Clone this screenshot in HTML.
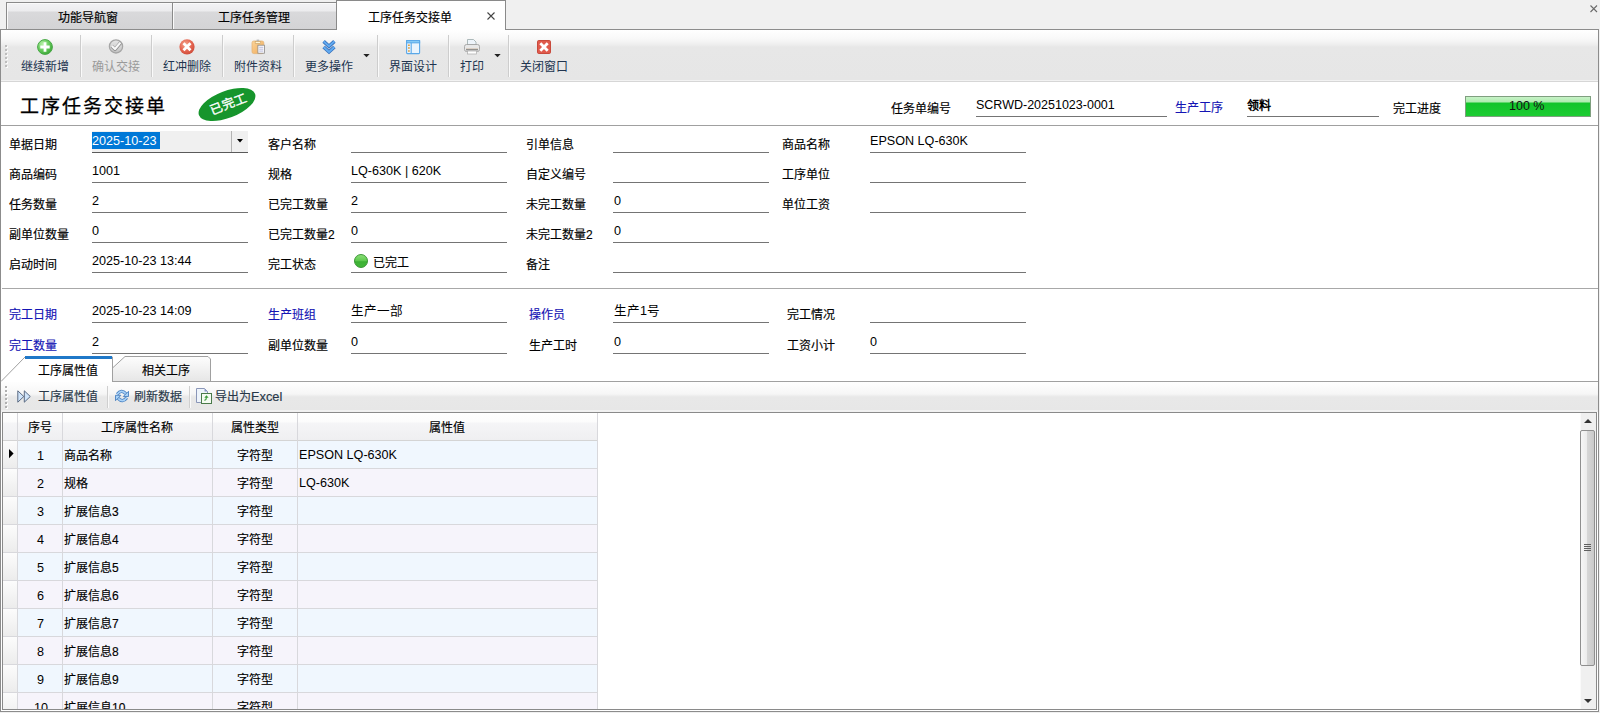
<!DOCTYPE html>
<html lang="zh-CN"><head><meta charset="utf-8"><style>
html,body{margin:0;padding:0;}
body{width:1600px;height:713px;overflow:hidden;position:relative;background:#f0f0f0;font-family:"Liberation Sans",sans-serif;font-size:12px;color:#000;}
.a{position:absolute;box-sizing:border-box;}
.t{position:absolute;white-space:nowrap;line-height:20px;}
.k{-webkit-text-stroke:0.15px currentColor;}
svg{position:absolute;overflow:visible}
</style></head><body>
<div class="a" style="left:6px;top:2px;width:167px;height:28px;border:1px solid #8a8a8a;border-bottom:none;background:linear-gradient(#f3f3f5 0px,#ececee 8px,#d9d9db 9px,#d3d3d5 100%);box-shadow:inset 1px 1px 0 #fafafa;"></div>
<div class="a" style="left:172px;top:2px;width:165px;height:28px;border:1px solid #8a8a8a;border-bottom:none;background:linear-gradient(#f3f3f5 0px,#ececee 8px,#d9d9db 9px,#d3d3d5 100%);box-shadow:inset 1px 1px 0 #fafafa;"></div>
<div class="a" style="left:0px;top:29px;width:1599px;height:683px;border:1px solid #8c8c8c;background:#fff;"></div>
<div class="a" style="left:336px;top:0px;width:170px;height:31px;border:1px solid #8a8a8a;border-bottom:none;background:#fff;"></div>
<div class="t k" style="left:58px;top:8px;">功能导航窗</div>
<div class="t k" style="left:218px;top:8px;">工序任务管理</div>
<div class="t k" style="left:368px;top:8px;">工序任务交接单</div>
<svg style="left:487px;top:12px" width="8" height="8"><path d="M0.5 0.5L7.5 7.5M7.5 0.5L0.5 7.5" stroke="#444" stroke-width="1.1"/></svg>
<svg style="left:1590px;top:5px" width="8" height="8"><path d="M0.5 0.5L7 7M7 0.5L0.5 7" stroke="#6a6a6a" stroke-width="1.1"/></svg>
<div class="a" style="left:1px;top:30px;width:1597px;height:52px;background:linear-gradient(#ffffff 0px,#f9f9f9 8px,#f3f3f3 12px,#ededed 15px,#e7e7e7 17px,#e6e6e6 50px,#f2f2f2 50px,#f2f2f2 51px,#d6d6d6 51px);"></div>
<div class="a" style="left:5px;top:45px;width:2px;height:2px;background:#bdbdbd;box-shadow:1px 1px 0 #fafafa;"></div>
<div class="a" style="left:5px;top:49px;width:2px;height:2px;background:#bdbdbd;box-shadow:1px 1px 0 #fafafa;"></div>
<div class="a" style="left:5px;top:53px;width:2px;height:2px;background:#bdbdbd;box-shadow:1px 1px 0 #fafafa;"></div>
<div class="a" style="left:5px;top:57px;width:2px;height:2px;background:#bdbdbd;box-shadow:1px 1px 0 #fafafa;"></div>
<div class="a" style="left:5px;top:61px;width:2px;height:2px;background:#bdbdbd;box-shadow:1px 1px 0 #fafafa;"></div>
<div class="a" style="left:5px;top:65px;width:2px;height:2px;background:#bdbdbd;box-shadow:1px 1px 0 #fafafa;"></div>
<div class="a" style="left:80px;top:35px;width:1px;height:42px;background:#cdcdcd;box-shadow:1px 0 0 #fafafa;"></div>
<div class="a" style="left:151px;top:35px;width:1px;height:42px;background:#cdcdcd;box-shadow:1px 0 0 #fafafa;"></div>
<div class="a" style="left:222px;top:35px;width:1px;height:42px;background:#cdcdcd;box-shadow:1px 0 0 #fafafa;"></div>
<div class="a" style="left:293px;top:35px;width:1px;height:42px;background:#cdcdcd;box-shadow:1px 0 0 #fafafa;"></div>
<div class="a" style="left:377px;top:35px;width:1px;height:42px;background:#cdcdcd;box-shadow:1px 0 0 #fafafa;"></div>
<div class="a" style="left:448px;top:35px;width:1px;height:42px;background:#cdcdcd;box-shadow:1px 0 0 #fafafa;"></div>
<div class="a" style="left:508px;top:35px;width:1px;height:42px;background:#cdcdcd;box-shadow:1px 0 0 #fafafa;"></div>
<div class="t k" style="left:21px;top:57px;color:#20344f;-webkit-text-stroke:0;">继续新增</div>
<div class="t k" style="left:92px;top:57px;color:#9a9a9a;-webkit-text-stroke:0;">确认交接</div>
<div class="t k" style="left:163px;top:57px;color:#20344f;-webkit-text-stroke:0;">红冲删除</div>
<div class="t k" style="left:234px;top:57px;color:#20344f;-webkit-text-stroke:0;">附件资料</div>
<div class="t k" style="left:305px;top:57px;color:#20344f;-webkit-text-stroke:0;">更多操作</div>
<div class="t k" style="left:389px;top:57px;color:#20344f;-webkit-text-stroke:0;">界面设计</div>
<div class="t k" style="left:460px;top:57px;color:#20344f;-webkit-text-stroke:0;">打印</div>
<div class="t k" style="left:520px;top:57px;color:#20344f;-webkit-text-stroke:0;">关闭窗口</div>
<svg style="left:363px;top:54px" width="7" height="4"><path d="M0.3 0H6.7L3.5 3.3Z" fill="#222"/></svg>
<svg style="left:494px;top:54px" width="7" height="4"><path d="M0.3 0H6.7L3.5 3.3Z" fill="#222"/></svg>
<svg style="left:37px;top:39px" width="16" height="16" viewBox="0 0 16 16">
<defs><radialGradient id="gp" cx="35%" cy="30%" r="75%"><stop offset="0" stop-color="#b8f2a8"/><stop offset="0.6" stop-color="#62c858"/><stop offset="1" stop-color="#3ca438"/></radialGradient></defs>
<circle cx="8" cy="8" r="7.4" fill="url(#gp)" stroke="#48a846" stroke-width="1"/>
<path d="M6.6 3.3H9.4V6.6H12.7V9.4H9.4V12.7H6.6V9.4H3.3V6.6H6.6Z" fill="#fff"/></svg>
<svg style="left:108px;top:39px" width="16" height="16" viewBox="0 0 16 16">
<defs><linearGradient id="gc" x1="0" y1="0" x2="0" y2="1"><stop offset="0" stop-color="#e6e6e6"/><stop offset="1" stop-color="#c4c4c4"/></linearGradient></defs>
<circle cx="8" cy="7.4" r="6.6" fill="url(#gc)" stroke="#a6a6a6" stroke-width="1.3"/>
<path d="M3.8 7.3L7 10.4L12.6 3.6" fill="none" stroke="#8e8e8e" stroke-width="3.4" stroke-linejoin="round"/>
<path d="M3.8 7L7 10L12.4 3.6" fill="none" stroke="#f8f8f8" stroke-width="2.2" stroke-linejoin="round"/></svg>
<svg style="left:179px;top:39px" width="16" height="16" viewBox="0 0 16 16">
<defs><radialGradient id="gr" cx="40%" cy="35%" r="70%"><stop offset="0" stop-color="#f4a890"/><stop offset="0.6" stop-color="#e46450"/><stop offset="1" stop-color="#cc4a38"/></radialGradient></defs>
<circle cx="8" cy="7.8" r="7.6" fill="url(#gr)"/>
<path d="M4.5 4.3L11.5 11.3M11.5 4.3L4.5 11.3" stroke="#fff" stroke-width="2.8"/></svg>
<svg style="left:251px;top:39px" width="16" height="16" viewBox="0 0 16 16">
<defs><linearGradient id="gcl" x1="0" y1="0" x2="1" y2="1"><stop offset="0" stop-color="#fbd49a"/><stop offset="1" stop-color="#f0aa58"/></linearGradient></defs>
<rect x="1" y="2" width="11.8" height="12.6" rx="1.8" fill="url(#gcl)" stroke="#e4b070" stroke-width="0.7"/>
<rect x="4.2" y="2.6" width="5.4" height="1.8" fill="#fff6d8" stroke="#c8a060" stroke-width="0.6"/>
<rect x="5.6" y="0.6" width="2.6" height="1.6" fill="#b8b8b8"/>
<rect x="6.9" y="6.2" width="6.6" height="8" fill="#fbfbfd" stroke="#8a8a8a" stroke-width="0.8"/>
<path d="M8.2 8.3H12.3M8.2 10.2H12.3M8.2 12.1H12.3" stroke="#b4b4d8" stroke-width="0.9"/></svg>
<svg style="left:322px;top:39px" width="16" height="16" viewBox="0 0 16 16">
<path d="M1.6 2.4L7 7.3L12.4 2.4M1.6 8L7 12.9L12.4 8" fill="none" stroke="#3a72bc" stroke-width="3.6"/>
<path d="M1.6 2.4L7 7.3L12.4 2.4M1.6 8L7 12.9L12.4 8" fill="none" stroke="#62acf2" stroke-width="1.9"/></svg>
<svg style="left:406px;top:40px" width="16" height="16" viewBox="0 0 16 16">
<rect x="0.6" y="0.6" width="13" height="13" rx="0.8" fill="#eaf4fd" stroke="#5aa8e8" stroke-width="1.1"/>
<rect x="0.6" y="0.6" width="13" height="2.2" fill="#8ed0f8" stroke="#5aa8e8" stroke-width="1.1"/>
<path d="M5.2 2.8V13.6" stroke="#5aa8e8" stroke-width="1.1"/>
<path d="M2.9 4.4V5.9M2.9 7.3V8.8M2.9 10.2V11.7" stroke="#e0a040" stroke-width="1.8"/></svg>
<svg style="left:464px;top:39px" width="16" height="16" viewBox="0 0 16 16">
<path d="M3.5 0.5H9.5L12 3V6H3.5Z" fill="#eef4fa" stroke="#9aa" stroke-width="0.8"/>
<rect x="0.5" y="5.5" width="15" height="7" rx="2" fill="#e8e8e8" stroke="#9a9a9a" stroke-width="0.8"/>
<path d="M2 9.8H14" stroke="#d8c8b8" stroke-width="1"/><path d="M2 10.8H14" stroke="#707070" stroke-width="1"/>
<rect x="3.5" y="12" width="9" height="3" fill="#fff" stroke="#aaa" stroke-width="0.7"/></svg>
<svg style="left:537px;top:40px" width="14" height="14" viewBox="0 0 14 14">
<rect x="0.5" y="0.5" width="13" height="13" rx="1.2" fill="#e05a4c" stroke="#c84a3c" stroke-width="1"/>
<path d="M3.3 3.3L10.7 10.7M10.7 3.3L3.3 10.7" stroke="#fff" stroke-width="2.8"/></svg>
<div class="a" style="left:1px;top:125px;width:1597px;height:1px;background:#a0a0a0;"></div>
<div class="t" style="left:20px;top:96px;font-size:19px;font-weight:normal;-webkit-text-stroke:0.25px #000;letter-spacing:2px;font-family:'Liberation Serif',serif;line-height:22px;">工序任务交接单</div>
<div class="a" style="left:197px;top:91px;width:60px;height:27px;border-radius:50%;background:#16952c;transform:rotate(-21deg);"></div>
<div class="t" style="left:209px;top:94px;font-size:12.5px;color:#fff;font-weight:normal;-webkit-text-stroke:0.35px #fff;transform:rotate(-21deg);transform-origin:20px 10px;">已完工</div>
<div class="t k" style="left:891px;top:99px;">任务单编号</div>
<div class="t" style="left:976px;top:95px;font-size:12.5px;">SCRWD-20251023-0001</div>
<div class="a" style="left:976px;top:116px;width:191px;height:1px;background:#747474;"></div>
<div class="t k" style="left:1175px;top:98px;color:#1414b4;">生产工序</div>
<div class="t k" style="left:1247px;top:96px;font-weight:bold;-webkit-text-stroke:0;">领料</div>
<div class="a" style="left:1247px;top:116px;width:132px;height:1px;background:#747474;"></div>
<div class="t k" style="left:1393px;top:99px;">完工进度</div>
<div class="a" style="left:1465px;top:96px;width:126px;height:21px;border:1px solid #7f9f7f;background:linear-gradient(#c6f2c6 0,#b0ecb0 5px,#12c42a 6px,#1ccc32 100%);"></div>
<div class="t" style="left:1509px;top:96px;font-size:12.5px;color:#111;">100 %</div>
<div class="t k" style="left:9px;top:135px;">单据日期</div>
<div class="a" style="left:92px;top:131px;width:156px;height:21px;background:#f0f0f0;"></div>
<div class="a" style="left:231px;top:131px;width:1px;height:21px;background:#b4b4b4;"></div>
<div class="a" style="left:92px;top:152px;width:156px;height:1px;background:#5a5a5a;"></div>
<div class="a" style="left:92px;top:132px;width:68px;height:17px;background:#0078d7;"></div>
<div class="t" style="left:92px;top:131px;font-size:12.6px;color:#fff;">2025-10-23</div>
<svg style="left:237px;top:139px" width="6" height="4"><path d="M0 0H6L3 3.5Z" fill="#000"/></svg>
<div class="t k" style="left:268px;top:135px;">客户名称</div>
<div class="a" style="left:351px;top:152px;width:156px;height:1px;background:#747474;"></div>
<div class="t k" style="left:526px;top:135px;">引单信息</div>
<div class="a" style="left:613px;top:152px;width:156px;height:1px;background:#747474;"></div>
<div class="t k" style="left:782px;top:135px;">商品名称</div>
<div class="a" style="left:870px;top:152px;width:156px;height:1px;background:#747474;"></div>
<div class="t" style="left:870px;top:131px;font-size:12.6px;">EPSON LQ-630K</div>
<div class="t k" style="left:9px;top:165px;">商品编码</div>
<div class="a" style="left:92px;top:182px;width:156px;height:1px;background:#747474;"></div>
<div class="t" style="left:92px;top:161px;font-size:12.6px;">1001</div>
<div class="t k" style="left:268px;top:165px;">规格</div>
<div class="a" style="left:351px;top:182px;width:156px;height:1px;background:#747474;"></div>
<div class="t" style="left:351px;top:161px;font-size:12.6px;">LQ-630K | 620K</div>
<div class="t k" style="left:526px;top:165px;">自定义编号</div>
<div class="a" style="left:613px;top:182px;width:156px;height:1px;background:#747474;"></div>
<div class="t k" style="left:782px;top:165px;">工序单位</div>
<div class="a" style="left:870px;top:182px;width:156px;height:1px;background:#747474;"></div>
<div class="t k" style="left:9px;top:195px;">任务数量</div>
<div class="a" style="left:92px;top:212px;width:156px;height:1px;background:#747474;"></div>
<div class="t" style="left:92px;top:191px;font-size:12.6px;">2</div>
<div class="t k" style="left:268px;top:195px;">已完工数量</div>
<div class="a" style="left:351px;top:212px;width:156px;height:1px;background:#747474;"></div>
<div class="t" style="left:351px;top:191px;font-size:12.6px;">2</div>
<div class="t k" style="left:526px;top:195px;">未完工数量</div>
<div class="a" style="left:613px;top:212px;width:156px;height:1px;background:#747474;"></div>
<div class="t" style="left:614px;top:191px;font-size:12.6px;">0</div>
<div class="t k" style="left:782px;top:195px;">单位工资</div>
<div class="a" style="left:870px;top:212px;width:156px;height:1px;background:#747474;"></div>
<div class="t k" style="left:9px;top:225px;">副单位数量</div>
<div class="a" style="left:92px;top:242px;width:156px;height:1px;background:#747474;"></div>
<div class="t" style="left:92px;top:221px;font-size:12.6px;">0</div>
<div class="t k" style="left:268px;top:225px;">已完工数量2</div>
<div class="a" style="left:351px;top:242px;width:156px;height:1px;background:#747474;"></div>
<div class="t" style="left:351px;top:221px;font-size:12.6px;">0</div>
<div class="t k" style="left:526px;top:225px;">未完工数量2</div>
<div class="a" style="left:613px;top:242px;width:156px;height:1px;background:#747474;"></div>
<div class="t" style="left:614px;top:221px;font-size:12.6px;">0</div>
<div class="t k" style="left:9px;top:255px;">启动时间</div>
<div class="a" style="left:92px;top:272px;width:156px;height:1px;background:#747474;"></div>
<div class="t" style="left:92px;top:251px;font-size:12.6px;">2025-10-23 13:44</div>
<div class="t k" style="left:268px;top:255px;">完工状态</div>
<div class="a" style="left:351px;top:272px;width:156px;height:1px;background:#747474;"></div>
<svg style="left:354px;top:254px" width="14" height="14" viewBox="0 0 14 14"><defs><linearGradient id="gd" x1="0" y1="0" x2="0" y2="1"><stop offset="0" stop-color="#8ee07a"/><stop offset="0.5" stop-color="#5cc84c"/><stop offset="0.55" stop-color="#3cb034"/><stop offset="1" stop-color="#44b83a"/></linearGradient></defs><circle cx="7" cy="7" r="6.5" fill="url(#gd)" stroke="#2f8f2a" stroke-width="0.9"/></svg>
<div class="t k" style="left:373px;top:253px;">已完工</div>
<div class="t k" style="left:526px;top:255px;">备注</div>
<div class="a" style="left:613px;top:272px;width:413px;height:1px;background:#747474;"></div>
<div class="a" style="left:2px;top:288px;width:1596px;height:1px;background:#a8a8a8;"></div>
<div class="t k" style="left:9px;top:305px;color:#1414b4;">完工日期</div>
<div class="a" style="left:92px;top:322px;width:156px;height:1px;background:#747474;"></div>
<div class="t" style="left:92px;top:301px;font-size:12.6px;">2025-10-23 14:09</div>
<div class="t k" style="left:268px;top:305px;color:#1414b4;">生产班组</div>
<div class="a" style="left:351px;top:322px;width:156px;height:1px;background:#747474;"></div>
<div class="t" style="left:351px;top:301px;font-size:12.6px;">生产一部</div>
<div class="t k" style="left:529px;top:305px;color:#1414b4;">操作员</div>
<div class="a" style="left:613px;top:322px;width:156px;height:1px;background:#747474;"></div>
<div class="t" style="left:614px;top:301px;font-size:12.6px;">生产1号</div>
<div class="t k" style="left:787px;top:305px;">完工情况</div>
<div class="a" style="left:870px;top:322px;width:156px;height:1px;background:#747474;"></div>
<div class="t k" style="left:9px;top:336px;color:#1414b4;">完工数量</div>
<div class="a" style="left:92px;top:353px;width:156px;height:1px;background:#747474;"></div>
<div class="t" style="left:92px;top:332px;font-size:12.6px;">2</div>
<div class="t k" style="left:268px;top:336px;">副单位数量</div>
<div class="a" style="left:351px;top:353px;width:156px;height:1px;background:#747474;"></div>
<div class="t" style="left:351px;top:332px;font-size:12.6px;">0</div>
<div class="t k" style="left:529px;top:336px;">生产工时</div>
<div class="a" style="left:613px;top:353px;width:156px;height:1px;background:#747474;"></div>
<div class="t" style="left:614px;top:332px;font-size:12.6px;">0</div>
<div class="t k" style="left:787px;top:336px;">工资小计</div>
<div class="a" style="left:870px;top:353px;width:156px;height:1px;background:#747474;"></div>
<div class="t" style="left:870px;top:332px;font-size:12.6px;">0</div>
<svg style="left:0px;top:355px" width="1599" height="28" viewBox="0 0 1599 28">
<defs><linearGradient id="gt2" x1="0" y1="0" x2="0" y2="1"><stop offset="0" stop-color="#fdfdfd"/><stop offset="1" stop-color="#e6e6e6"/></linearGradient></defs>
<path d="M112.5 26.5V13L125 1.5H208L210.5 4V26.5" fill="url(#gt2)" stroke="#a0a0a0" stroke-width="1"/>
<path d="M1 26.5L25 2H112.5V26.5" fill="#fff" stroke="#a0a0a0" stroke-width="1"/>
<path d="M25 2.5H112" stroke="#1f78c8" stroke-width="3"/>
<path d="M112 26.5H1598" stroke="#a0a0a0" stroke-width="1"/>
</svg>
<div class="t k" style="left:38px;top:361px;">工序属性值</div>
<div class="t k" style="left:142px;top:361px;">相关工序</div>
<div class="a" style="left:1px;top:382px;width:1597px;height:30px;background:linear-gradient(#fefefe 0px,#f6f6f6 12px,#ececec 14px,#e8e8e8 15px,#e7e7e7 28px,#f1f1f1 28px);"></div>
<div class="a" style="left:5px;top:386px;width:2px;height:2px;background:#b0b0b0;box-shadow:1px 1px 0 #fff;"></div>
<div class="a" style="left:5px;top:390px;width:2px;height:2px;background:#b0b0b0;box-shadow:1px 1px 0 #fff;"></div>
<div class="a" style="left:5px;top:394px;width:2px;height:2px;background:#b0b0b0;box-shadow:1px 1px 0 #fff;"></div>
<div class="a" style="left:5px;top:398px;width:2px;height:2px;background:#b0b0b0;box-shadow:1px 1px 0 #fff;"></div>
<div class="a" style="left:5px;top:402px;width:2px;height:2px;background:#b0b0b0;box-shadow:1px 1px 0 #fff;"></div>
<div class="a" style="left:5px;top:406px;width:2px;height:2px;background:#b0b0b0;box-shadow:1px 1px 0 #fff;"></div>
<div class="a" style="left:107px;top:386px;width:1px;height:22px;background:#cfcfcf;box-shadow:1px 0 0 #fafafa;"></div>
<div class="a" style="left:189px;top:386px;width:1px;height:22px;background:#cfcfcf;box-shadow:1px 0 0 #fafafa;"></div>
<div class="t k" style="left:38px;top:387px;color:#283848;">工序属性值</div>
<div class="t k" style="left:134px;top:387px;color:#283848;">刷新数据</div>
<div class="t k" style="left:215px;top:387px;color:#283848;">导出为<span style='font-size:12.8px'>Excel</span></div>
<svg style="left:17px;top:390px" width="15" height="13" viewBox="0 0 15 13">
<path d="M0.8 0.8L6.8 6.5L0.8 12.2Z" fill="#cfe4fa" stroke="#5a6a82" stroke-width="1"/>
<path d="M7.3 0.8L13.3 6.5L7.3 12.2Z" fill="#cfe4fa" stroke="#5a6a82" stroke-width="1"/></svg>
<svg style="left:115px;top:389px" width="14" height="14" viewBox="0 0 14 14">
<path d="M2.3 5.2Q6.3 -0.2 10.8 4.6" fill="none" stroke="#4a80c0" stroke-width="3.4"/>
<path d="M2.3 5.2Q6.3 -0.2 10.8 4.6" fill="none" stroke="#a8d2f8" stroke-width="1.6"/>
<path d="M13.5 2.3V7.5H8.3Z" fill="#a8d2f8" stroke="#4a80c0" stroke-width="0.9" stroke-linejoin="round"/>
<path d="M11.7 8.8Q7.7 14.2 3.2 9.4" fill="none" stroke="#4a80c0" stroke-width="3.4"/>
<path d="M11.7 8.8Q7.7 14.2 3.2 9.4" fill="none" stroke="#a8d2f8" stroke-width="1.6"/>
<path d="M0.5 11.7V6.3H5.9Z" fill="#a8d2f8" stroke="#4a80c0" stroke-width="0.9" stroke-linejoin="round"/></svg>
<svg style="left:196px;top:388px" width="17" height="17" viewBox="0 0 17 17">
<path d="M0.5 0.5H8.5L11.5 3.5V14.5H0.5Z" fill="#eef4fb" stroke="#8a96b8" stroke-width="1"/>
<path d="M8.5 0.5V3.5H11.5Z" fill="#8a96c8"/>
<rect x="5.5" y="5.5" width="10" height="10" fill="#f4fbf2" stroke="#4a7a4a" stroke-width="1"/>
<path d="M8.3 12.8Q11 12.8 10.8 9.8H12.6L10.5 7.3L8.3 9.8H9.8Q9.8 11.7 8.3 11.7Z" fill="#3a9a3a"/></svg>
<div class="a" style="left:2px;top:412px;width:1595px;height:298px;border:1px solid #8a8a8a;background:#fff;"></div>
<div class="a" style="left:3px;top:413px;width:594px;height:27px;background:linear-gradient(#ffffff 0,#fcfcfc 9px,#f5f5f7 10px,#efeff1 100%);"></div>
<div class="a" style="left:3px;top:440px;width:594px;height:1px;background:#d4d4d4;"></div>
<div class="a" style="left:17px;top:413px;width:1px;height:296px;background:#d8d8dc;"></div>
<div class="a" style="left:62px;top:413px;width:1px;height:296px;background:#d8d8dc;"></div>
<div class="a" style="left:212px;top:413px;width:1px;height:296px;background:#d8d8dc;"></div>
<div class="a" style="left:297px;top:413px;width:1px;height:296px;background:#d8d8dc;"></div>
<div class="a" style="left:597px;top:413px;width:1px;height:296px;background:#d8d8dc;"></div>
<div class="t k" style="left:28px;top:418px;">序号</div>
<div class="t k" style="left:101px;top:418px;">工序属性名称</div>
<div class="t k" style="left:231px;top:418px;">属性类型</div>
<div class="t k" style="left:429px;top:418px;">属性值</div>
<div class="a" style="left:18px;top:441px;width:579px;height:27px;background:#f0f7fe;"></div>
<div class="a" style="left:3px;top:441px;width:14px;height:27px;background:linear-gradient(#fcfcfc,#ececec);"></div>
<div class="a" style="left:3px;top:468px;width:594px;height:1px;background:#d8d8dc;"></div>
<div class="t" style="left:37px;top:446px;font-size:12.6px;">1</div>
<div class="t k" style="left:64px;top:446px;">商品名称</div>
<div class="t k" style="left:237px;top:446px;">字符型</div>
<div class="t" style="left:299px;top:445px;font-size:12.6px;">EPSON LQ-630K</div>
<div class="a" style="left:18px;top:469px;width:579px;height:27px;background:#f6f4fb;"></div>
<div class="a" style="left:3px;top:469px;width:14px;height:27px;background:linear-gradient(#fcfcfc,#ececec);"></div>
<div class="a" style="left:3px;top:496px;width:594px;height:1px;background:#d8d8dc;"></div>
<div class="t" style="left:37px;top:474px;font-size:12.6px;">2</div>
<div class="t k" style="left:64px;top:474px;">规格</div>
<div class="t k" style="left:237px;top:474px;">字符型</div>
<div class="t" style="left:299px;top:473px;font-size:12.6px;">LQ-630K</div>
<div class="a" style="left:18px;top:497px;width:579px;height:27px;background:#f0f7fe;"></div>
<div class="a" style="left:3px;top:497px;width:14px;height:27px;background:linear-gradient(#fcfcfc,#ececec);"></div>
<div class="a" style="left:3px;top:524px;width:594px;height:1px;background:#d8d8dc;"></div>
<div class="t" style="left:37px;top:502px;font-size:12.6px;">3</div>
<div class="t k" style="left:64px;top:502px;">扩展信息3</div>
<div class="t k" style="left:237px;top:502px;">字符型</div>
<div class="a" style="left:18px;top:525px;width:579px;height:27px;background:#f6f4fb;"></div>
<div class="a" style="left:3px;top:525px;width:14px;height:27px;background:linear-gradient(#fcfcfc,#ececec);"></div>
<div class="a" style="left:3px;top:552px;width:594px;height:1px;background:#d8d8dc;"></div>
<div class="t" style="left:37px;top:530px;font-size:12.6px;">4</div>
<div class="t k" style="left:64px;top:530px;">扩展信息4</div>
<div class="t k" style="left:237px;top:530px;">字符型</div>
<div class="a" style="left:18px;top:553px;width:579px;height:27px;background:#f0f7fe;"></div>
<div class="a" style="left:3px;top:553px;width:14px;height:27px;background:linear-gradient(#fcfcfc,#ececec);"></div>
<div class="a" style="left:3px;top:580px;width:594px;height:1px;background:#d8d8dc;"></div>
<div class="t" style="left:37px;top:558px;font-size:12.6px;">5</div>
<div class="t k" style="left:64px;top:558px;">扩展信息5</div>
<div class="t k" style="left:237px;top:558px;">字符型</div>
<div class="a" style="left:18px;top:581px;width:579px;height:27px;background:#f6f4fb;"></div>
<div class="a" style="left:3px;top:581px;width:14px;height:27px;background:linear-gradient(#fcfcfc,#ececec);"></div>
<div class="a" style="left:3px;top:608px;width:594px;height:1px;background:#d8d8dc;"></div>
<div class="t" style="left:37px;top:586px;font-size:12.6px;">6</div>
<div class="t k" style="left:64px;top:586px;">扩展信息6</div>
<div class="t k" style="left:237px;top:586px;">字符型</div>
<div class="a" style="left:18px;top:609px;width:579px;height:27px;background:#f0f7fe;"></div>
<div class="a" style="left:3px;top:609px;width:14px;height:27px;background:linear-gradient(#fcfcfc,#ececec);"></div>
<div class="a" style="left:3px;top:636px;width:594px;height:1px;background:#d8d8dc;"></div>
<div class="t" style="left:37px;top:614px;font-size:12.6px;">7</div>
<div class="t k" style="left:64px;top:614px;">扩展信息7</div>
<div class="t k" style="left:237px;top:614px;">字符型</div>
<div class="a" style="left:18px;top:637px;width:579px;height:27px;background:#f6f4fb;"></div>
<div class="a" style="left:3px;top:637px;width:14px;height:27px;background:linear-gradient(#fcfcfc,#ececec);"></div>
<div class="a" style="left:3px;top:664px;width:594px;height:1px;background:#d8d8dc;"></div>
<div class="t" style="left:37px;top:642px;font-size:12.6px;">8</div>
<div class="t k" style="left:64px;top:642px;">扩展信息8</div>
<div class="t k" style="left:237px;top:642px;">字符型</div>
<div class="a" style="left:18px;top:665px;width:579px;height:27px;background:#f0f7fe;"></div>
<div class="a" style="left:3px;top:665px;width:14px;height:27px;background:linear-gradient(#fcfcfc,#ececec);"></div>
<div class="a" style="left:3px;top:692px;width:594px;height:1px;background:#d8d8dc;"></div>
<div class="t" style="left:37px;top:670px;font-size:12.6px;">9</div>
<div class="t k" style="left:64px;top:670px;">扩展信息9</div>
<div class="t k" style="left:237px;top:670px;">字符型</div>
<div class="a" style="left:18px;top:693px;width:579px;height:27px;background:#f6f4fb;"></div>
<div class="a" style="left:3px;top:693px;width:14px;height:27px;background:linear-gradient(#fcfcfc,#ececec);"></div>
<div class="a" style="left:3px;top:720px;width:594px;height:1px;background:#d8d8dc;"></div>
<div class="t" style="left:34px;top:698px;font-size:12.6px;">10</div>
<div class="t k" style="left:64px;top:698px;">扩展信息10</div>
<div class="t k" style="left:237px;top:698px;">字符型</div>
<div class="a" style="left:17px;top:413px;width:1px;height:296px;background:#d8d8dc;"></div>
<div class="a" style="left:62px;top:413px;width:1px;height:296px;background:#d8d8dc;"></div>
<div class="a" style="left:212px;top:413px;width:1px;height:296px;background:#d8d8dc;"></div>
<div class="a" style="left:297px;top:413px;width:1px;height:296px;background:#d8d8dc;"></div>
<div class="a" style="left:597px;top:413px;width:1px;height:296px;background:#d8d8dc;"></div>
<svg style="left:9px;top:449px" width="5" height="10"><path d="M0 0L4.6 4.6L0 9.2Z" fill="#000"/></svg>
<div class="a" style="left:1580px;top:413px;width:16px;height:296px;background:#f0f0f0;box-shadow:inset 1px 0 0 #fafafa;"></div>
<svg style="left:1584px;top:419px" width="8" height="4"><path d="M0 4H8L4 0Z" fill="#333"/></svg>
<svg style="left:1584px;top:699px" width="8" height="4"><path d="M0 0H8L4 4Z" fill="#333"/></svg>
<div class="a" style="left:1580px;top:430px;width:15px;height:236px;border:1px solid #8f8f8f;border-radius:2px;background:linear-gradient(90deg,#f6f6f6 0,#ececec 45%,#d6d6d6 50%,#cacaca 100%);"></div>
<div class="a" style="left:1584px;top:544px;width:7px;height:1px;background:#606060;"></div>
<div class="a" style="left:1584px;top:546px;width:7px;height:1px;background:#606060;"></div>
<div class="a" style="left:1584px;top:548px;width:7px;height:1px;background:#606060;"></div>
<div class="a" style="left:1584px;top:550px;width:7px;height:1px;background:#606060;"></div>
<div class="a" style="left:2px;top:709px;width:1595px;height:1px;background:#8a8a8a;"></div>
<div class="a" style="left:1px;top:710px;width:1597px;height:1px;background:#fff;"></div>
<div class="a" style="left:0px;top:711px;width:1599px;height:1px;background:#8c8c8c;"></div>
<div class="a" style="left:0px;top:712px;width:1600px;height:1px;background:#f0f0f0;"></div>
<div class="a" style="left:2px;top:690px;width:1px;height:19px;background:#8a8a8a;"></div>
<div class="a" style="left:0px;top:690px;width:1px;height:21px;background:#8c8c8c;"></div>
<div class="a" style="left:1px;top:690px;width:1px;height:20px;background:#fff;"></div>
</body></html>
